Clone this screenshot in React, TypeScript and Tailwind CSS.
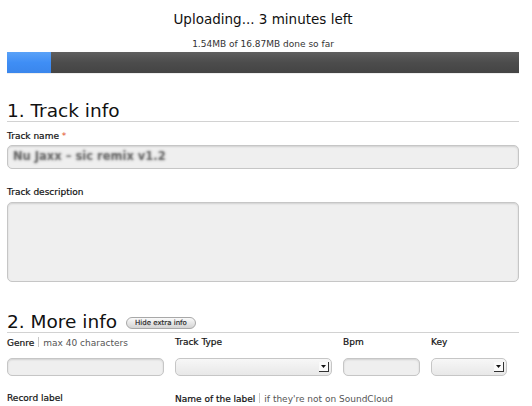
const labelCls = "text-[9px] leading-[11px] text-[#111] [-webkit-text-stroke:0.2px_#111]"
const hintCls = "text-[9px] leading-[11px] text-[#555] [-webkit-text-stroke:0px]"

function Sep() {
  return <span className="mx-[4px] inline-block h-[10px] w-px bg-[#c8c8c8] align-[-1px]" />
}

function TextInput({ className = "", children }: { className?: string; children?: React.ReactNode }) {
  return (
    <div
      className={`flex items-center rounded-[5px] border border-[#c6c6c6] bg-[#efefef] shadow-[inset_0_1px_2px_rgba(0,0,0,0.13)] ${className}`}
    >
      {children}
    </div>
  )
}

function Select() {
  return (
    <div className="flex h-[18px] items-center justify-end rounded-[5px] border border-[#c6c6c6] bg-gradient-to-b from-[#f7f7f7] to-[#e8e8e8] pr-[2px]">
      <div className="flex h-[10px] w-[10px] items-center justify-center border-r border-b border-[#333] bg-[#fafafa]">
        <svg width="5" height="3" viewBox="0 0 5 3">
          <path d="M0 0h5L2.5 3z" fill="#111" />
        </svg>
      </div>
    </div>
  )
}

export default function App() {
  return (
    <div className="h-[406px] w-[532px] overflow-hidden bg-white font-['DejaVu_Sans',sans-serif] text-[#222]">
      <div className="pl-[7px] pr-[13px]">
        {/* Upload status */}
        <p className="mt-[11px] text-center text-[13.5px] leading-[16px] text-[#111]">Uploading... 3 minutes left</p>
        <p className="mt-[11px] text-center text-[9px] leading-[12px] text-[#333]">1.54MB of 16.87MB done so far</p>
        <div className="mt-[2px] flex h-[21px] bg-gradient-to-b from-[#606060] via-[#4c4c4c] to-[#444] shadow-[0_1px_0_#eee]">
          <div className="w-[44px] bg-gradient-to-b from-[#5aa2f8] via-[#3f8ef5] to-[#3a86ec]" />
        </div>

        {/* Track info */}
        <h2 className="mt-[27px] h-[22px] border-b border-[#d2d2d2] text-[18.5px] leading-[21px] text-[#111]">1. Track info</h2>
        <p className={`mt-[9px] ${labelCls}`}>
          Track name <span className="text-[#e2502c] [-webkit-text-stroke:0px]">*</span>
        </p>
        <TextInput className="mt-[3px] h-[24px] pl-[5px]">
          <span className="text-[11.5px] font-bold text-transparent [text-shadow:0_0_2.5px_rgba(40,40,40,0.75)]">
            Nu Jaxx – sic remix v1.2
          </span>
        </TextInput>
        <p className={`mt-[18px] ${labelCls}`}>Track description</p>
        <TextInput className="mt-[4px] h-[80px]" />

        {/* More info */}
        <div className="mt-[29px] flex h-[22px] items-center border-b border-[#d2d2d2]">
          <h2 className="text-[18.5px] leading-[21px] text-[#111]">2. More info</h2>
          <button className="mt-[3px] ml-[9px] flex h-[12px] w-[70px] items-center justify-center rounded-full border border-[#a8a8a8] bg-gradient-to-b from-[#fafafa] to-[#d4d4d4] text-[7px] leading-none text-[#222] [-webkit-text-stroke:0.15px_#222]">
            Hide extra info
          </button>
        </div>

        <div className="mt-[4px] grid grid-cols-[157px_157px_77px_76px] gap-x-[11px]">
          <p className={labelCls}>
            Genre
            <Sep />
            <span className={hintCls}>max 40 characters</span>
          </p>
          <p className={labelCls}>Track Type</p>
          <p className={labelCls}>Bpm</p>
          <p className={labelCls}>Key</p>

          <TextInput className="mt-[9px] h-[18px]" />
          <div className="mt-[9px]">
            <Select />
          </div>
          <TextInput className="mt-[9px] h-[18px]" />
          <div className="mt-[9px]">
            <Select />
          </div>

          <p className={`mt-[17px] ${labelCls}`}>Record label</p>
          <p className={`col-span-3 mt-[17px] ${labelCls}`}>
            Name of the label
            <Sep />
            <span className={hintCls}>if they're not on SoundCloud</span>
          </p>
        </div>
      </div>
    </div>
  )
}
